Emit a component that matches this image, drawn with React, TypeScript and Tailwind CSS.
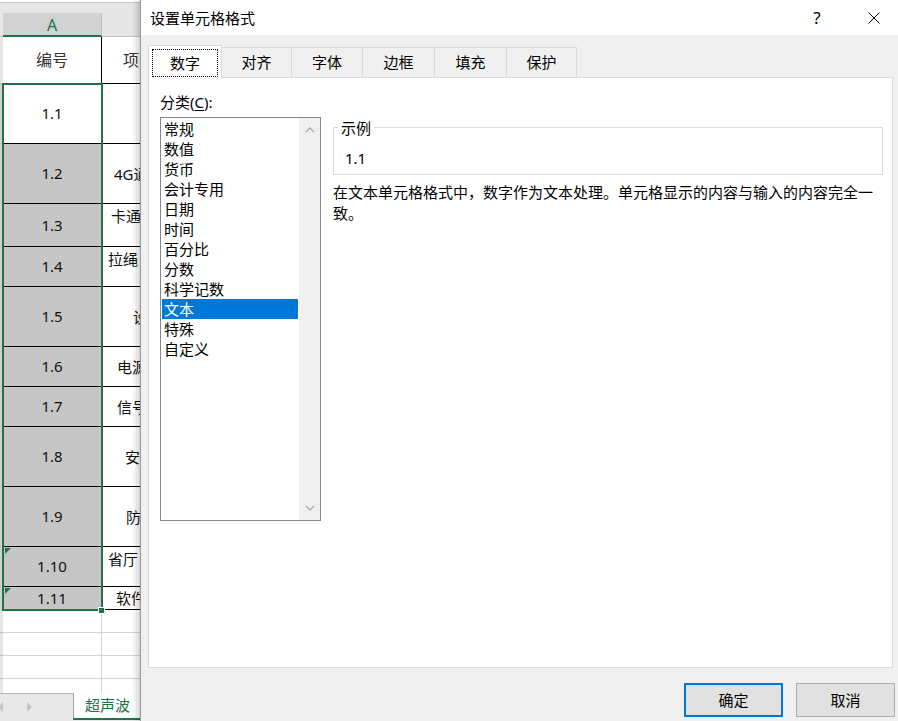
import React from "react";

// ── Data ──────────────────────────────────────────────────────────────────────

type SheetRow = { n: string; h: string; b: string; bCls: string; mark?: boolean };

const sheetRows: SheetRow[] = [
  { n: "1.1", h: "h-[60px]", b: "", bCls: "" },
  { n: "1.2", h: "h-[60px]", b: "4G通讯模块", bCls: "items-center pl-[12px]" },
  { n: "1.3", h: "h-[43px]", b: "卡通", bCls: "items-start pt-[2px] pl-[9px]" },
  { n: "1.4", h: "h-[40px]", b: "拉绳", bCls: "items-start pt-[2px] pl-[6px]" },
  { n: "1.5", h: "h-[60px]", b: "设备", bCls: "items-center pl-[31px]" },
  { n: "1.6", h: "h-[40px]", b: "电源", bCls: "items-center pl-[15px]" },
  { n: "1.7", h: "h-[40px]", b: "信号", bCls: "items-center pl-[15px]" },
  { n: "1.8", h: "h-[60px]", b: "安装", bCls: "items-center pl-[23px]" },
  { n: "1.9", h: "h-[60px]", b: "防雷", bCls: "items-center pl-[24px]" },
  { n: "1.10", h: "h-[40px]", b: "省厅", bCls: "items-start pt-[2px] pl-[6px]", mark: true },
  { n: "1.11", h: "h-[23px]", b: "软件", bCls: "items-center pl-[14px]", mark: true },
];

const categories = [
  "常规",
  "数值",
  "货币",
  "会计专用",
  "日期",
  "时间",
  "百分比",
  "分数",
  "科学记数",
  "文本",
  "特殊",
  "自定义",
];

const tabs = [
  { label: "对齐", w: "w-[70px]" },
  { label: "字体", w: "w-[71px]" },
  { label: "边框", w: "w-[72px]" },
  { label: "填充", w: "w-[72px]" },
  { label: "保护", w: "w-[70px]" },
];

// ── Sheet (behind the dialog) ─────────────────────────────────────────────────

const Sheet = () => (
  <div className="relative flex w-[140px] shrink-0 flex-col overflow-hidden bg-white">
    <div className="h-[2px] shrink-0 bg-white" />
    <div className="h-[11px] shrink-0 border-t border-[#c6c6c6] bg-[#e6e6e6]" />

    {/* column header */}
    <div className="flex h-[24px] shrink-0">
      <div className="w-[3px] shrink-0 border-b border-[#bfbfbf] bg-[#e6e6e6]" />
      <div className="flex w-[99px] shrink-0 items-center justify-center border-r border-b-2 border-r-[#bfbfbf] border-b-[#217346] bg-[#d2d2d2] pt-[1px] text-[16px] leading-none text-[#217346]">
        A
      </div>
      <div className="min-w-0 flex-1 border-b border-[#bfbfbf] bg-[#e6e6e6]" />
    </div>

    {/* title row */}
    <div className="flex h-[47px] shrink-0">
      <div className="w-[3px] shrink-0 border-b border-[#bfbfbf] bg-[#e6e6e6]" />
      <div className="flex w-[99px] shrink-0 items-center justify-center border-r border-b border-black text-[16px] leading-none text-[#333]">
        编号
      </div>
      <div className="flex min-w-0 flex-1 items-center overflow-hidden whitespace-nowrap border-b border-black pl-[21px] text-[16px] leading-none text-[#333]">
        项目
      </div>
    </div>

    {sheetRows.map((r, i) => (
      <div key={r.n} className={`flex shrink-0 ${r.h}`}>
        <div className="w-[3px] shrink-0 border-b border-[#bfbfbf] bg-[#d2d2d2]" />
        <div
          className={`relative flex w-[99px] shrink-0 items-center justify-center border-r border-b border-black text-[15px] leading-none text-[#111] ${
            i === 0 ? "bg-white" : "bg-[#c6c6c6]"
          }`}
        >
          {r.mark ? (
            <svg className="absolute left-[2px] top-[1px]" width="6" height="6" viewBox="0 0 6 6">
              <polygon points="0,0 6,0 0,6" fill="#217346" />
            </svg>
          ) : null}
          {r.n}
        </div>
        <div
          className={`flex min-w-0 flex-1 overflow-hidden whitespace-nowrap border-b border-black text-[15px] leading-[20px] text-[#111] ${r.bCls}`}
        >
          {r.b}
        </div>
      </div>
    ))}

    {/* empty rows */}
    {[0, 1, 2].map((k) => (
      <div key={k} className="flex h-[23px] shrink-0">
        <div className="w-[3px] shrink-0 border-b border-[#bfbfbf] bg-[#e6e6e6]" />
        <div className="w-[99px] shrink-0 border-r border-b border-[#d4d4d4]" />
        <div className="min-w-0 flex-1 border-b border-[#d4d4d4]" />
      </div>
    ))}
    <div className="flex flex-1">
      <div className="w-[3px] shrink-0 bg-[#e6e6e6]" />
      <div className="w-[99px] shrink-0 border-r border-[#d4d4d4]" />
      <div className="min-w-0 flex-1" />
    </div>

    {/* sheet tabs */}
    <div className="flex h-[28px] shrink-0 border-t border-[#b4b4b4] bg-[#e8e8e8]">
      <svg width="73" height="27" viewBox="0 0 73 27" className="shrink-0">
        <polygon points="3,8 -2,13 3,18" fill="#c4c4c4" />
        <polygon points="27,8 32,13 27,18" fill="#c4c4c4" />
      </svg>
      <div className="-mt-px flex h-[27px] min-w-0 flex-1 items-center overflow-hidden whitespace-nowrap border-l border-b-2 border-l-[#a0a0a0] border-b-[#217346] bg-white pl-[11px] text-[15px] leading-none text-[#217346]">
        超声波
      </div>
    </div>

    {/* selection outline */}
    <div className="pointer-events-none absolute left-[2px] top-[83px] h-[528px] w-[101px] border-2 border-[#217346]" />
    <div className="pointer-events-none absolute left-[98px] top-[607px] h-[7px] w-[7px] border border-white bg-[#217346]" />
  </div>
);

// ── Dialog ────────────────────────────────────────────────────────────────────

const Chevron = ({ up }: { up?: boolean }) => (
  <svg width="10" height="6" viewBox="0 0 10 6">
    <path
      d={up ? "M1 5 L5 1 L9 5" : "M1 1 L5 5 L9 1"}
      fill="none"
      stroke="#a8a8a8"
      strokeWidth="1.3"
    />
  </svg>
);

const Dialog = () => (
  <div className="relative z-10 flex w-[758px] shrink-0 flex-col border-l border-[#9a9a9a] bg-[#f0f0f0] shadow-[-3px_0_6px_rgba(0,0,0,0.2)]">
    {/* title bar */}
    <div className="flex h-[35px] shrink-0 items-center bg-white">
      <span className="pl-[9px] text-[15px] leading-[20px]">设置单元格格式</span>
      <span className="ml-auto w-[20px] text-center text-[17px] leading-[20px]">?</span>
      <svg className="ml-[41px] mr-[18px]" width="12" height="12" viewBox="0 0 12 12">
        <path d="M0.5 0.5 L11.5 11.5 M11.5 0.5 L0.5 11.5" stroke="#000" strokeWidth="1" />
      </svg>
    </div>

    <div className="flex flex-col pl-[7px] pt-[10px]">
      {/* tabs */}
      <div className="flex h-[32px] items-end">
        <div className="relative z-10 -mb-px flex h-[33px] w-[74px] border border-b-0 border-[#d9d9d9] bg-white px-[3px] pt-[3px] pb-[1px]">
          <span className="flex flex-1 items-center justify-center border border-dotted border-black text-[15px] leading-none">
            数字
          </span>
        </div>
        {tabs.map((t) => (
          <div
            key={t.label}
            className={`flex h-[30px] items-center justify-center border-t border-r border-[#d9d9d9] bg-[#f0f0f0] text-[15px] leading-none ${t.w}`}
          >
            {t.label}
          </div>
        ))}
      </div>

      {/* panel */}
      <div className="flex h-[591px] w-[745px] gap-[12px] border border-[#d9d9d9] bg-white pl-[11px]">
        <div className="flex flex-col pt-[14px]">
          <span className="text-[15px] leading-[20px]">
            分类(<span className="underline underline-offset-2">C</span>):
          </span>
          <div className="mt-[5px] flex h-[404px] w-[161px] border border-[#828790]">
            <div className="flex flex-1 flex-col px-[1px] pt-[1px]">
              {categories.map((c) => (
                <div
                  key={c}
                  className={`h-[20px] px-[2px] text-[15px] leading-[20px] ${
                    c === "文本" ? "bg-[#0078d7] text-white" : ""
                  }`}
                >
                  {c}
                </div>
              ))}
            </div>
            <div className="flex w-[21px] flex-col justify-between bg-[#f0f0f0]">
              <div className="flex h-[24px] items-center justify-center">
                <Chevron up />
              </div>
              <div className="flex h-[24px] items-center justify-center">
                <Chevron />
              </div>
            </div>
          </div>
        </div>

        <div className="flex flex-col pt-[49px]">
          <div className="relative h-[48px] w-[550px] border border-[#dcdcdc] pl-[11px] pt-[20px]">
            <span className="absolute -top-[10px] left-[4px] bg-white px-[3px] text-[15px] leading-[20px]">
              示例
            </span>
            <span className="block text-[15px] leading-[20px]">1.1</span>
          </div>
          <p className="mt-[7px] w-[550px] text-[15px] leading-[21px]">
            在文本单元格格式中，数字作为文本处理。单元格显示的内容与输入的内容完全一致。
          </p>
        </div>
      </div>

      {/* buttons */}
      <div className="mt-[15px] flex gap-[13px] pl-[536px]">
        <button
          type="button"
          className="flex h-[34px] w-[99px] items-center justify-center border-2 border-[#0078d7] bg-[#e1e1e1] text-[15px] leading-none"
        >
          确定
        </button>
        <button
          type="button"
          className="flex h-[34px] w-[99px] items-center justify-center border border-[#adadad] bg-[#e1e1e1] text-[15px] leading-none"
        >
          取消
        </button>
      </div>
    </div>
  </div>
);

// ── App ───────────────────────────────────────────────────────────────────────

export default function App() {
  return (
    <div className="flex h-[721px] w-[898px] overflow-hidden bg-white font-['Noto_Sans','Noto_Sans_CJK_SC',sans-serif] text-black">
      <Sheet />
      <Dialog />
    </div>
  );
}
